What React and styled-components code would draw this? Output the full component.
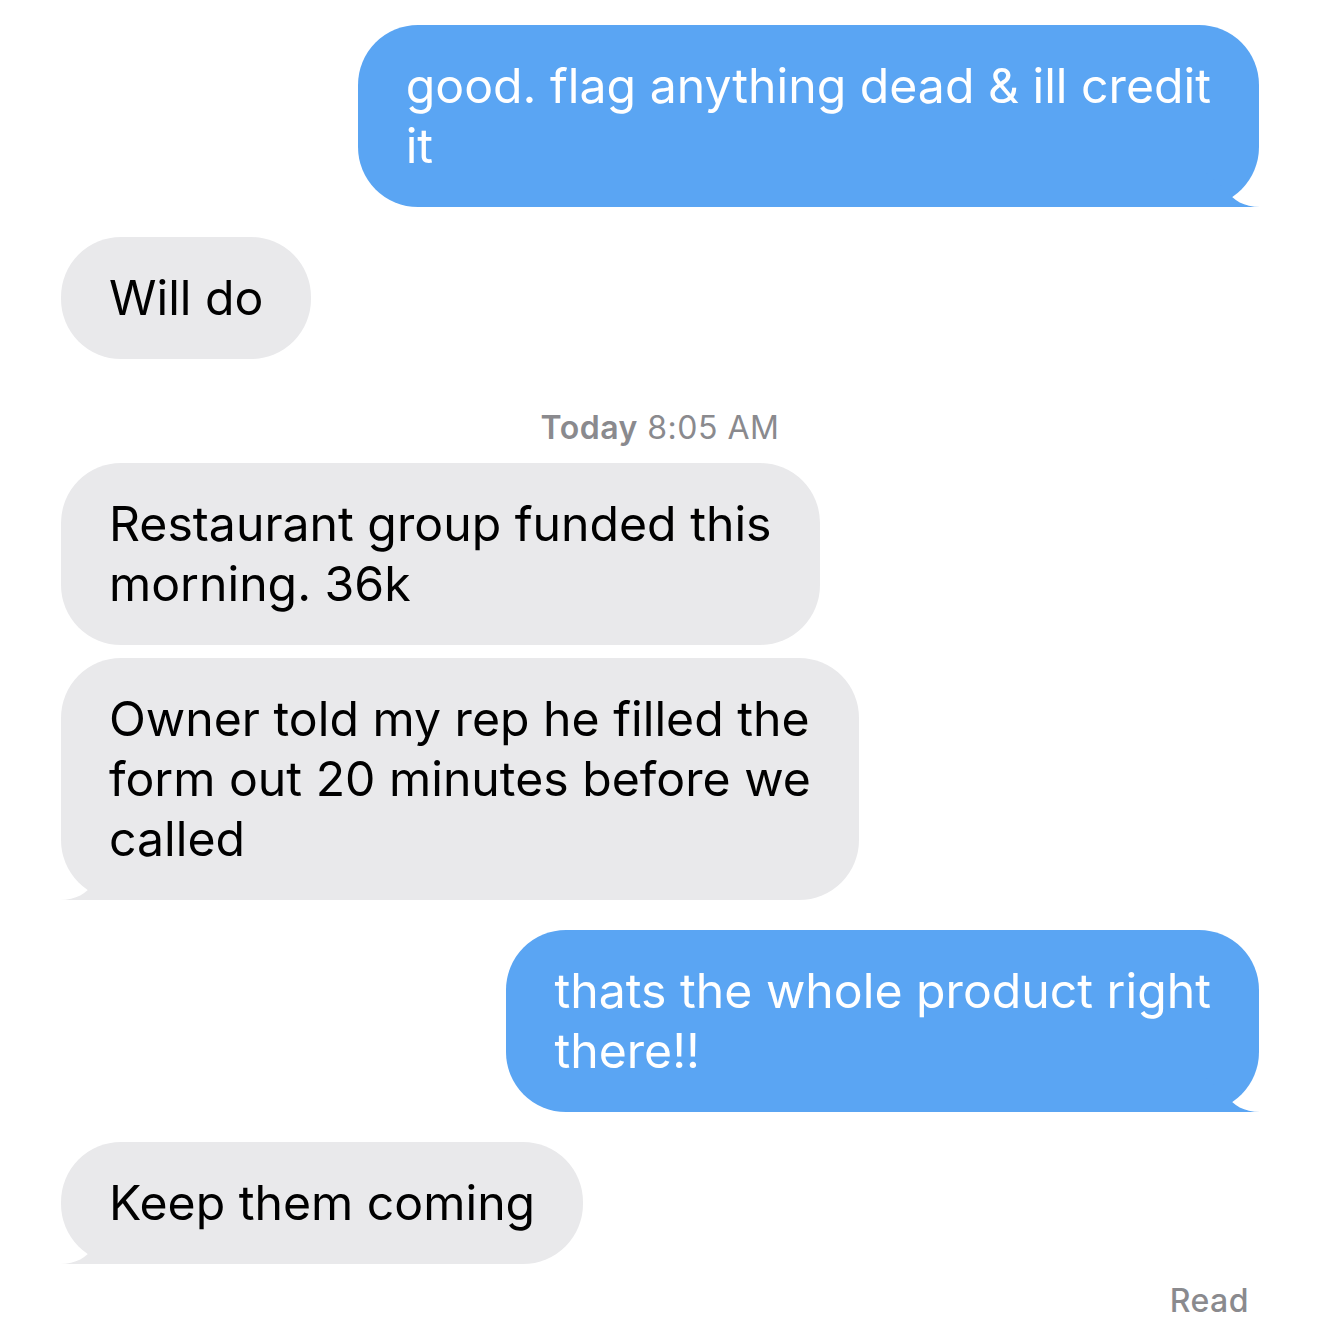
import React from 'react'
import styled, { createGlobalStyle } from 'styled-components'

const GlobalStyle = createGlobalStyle`
  html, body {
    margin: 0;
    background: #fff;
  }
  body {
    font-family: Inter, "Noto Sans", sans-serif;
    -webkit-font-smoothing: antialiased;
  }
`

const BLUE = '#5AA5F3'
const GRAY = '#E9E9EB'

function Tail({ side }) {
  return (
    <TailSvg $side={side} width="62" height="40" viewBox="0 0 62 40">
      <path d="M0 0 L28 24 C34 33 45 40 61 40 L0 40 Z" fill={side === 'me' ? BLUE : GRAY} />
    </TailSvg>
  )
}

function Bubble({ from, lines, tail, gap }) {
  return (
    <Row $from={from} $gap={gap}>
      <Body $from={from}>
        {lines.map((l, i) => <Line key={i}>{l}</Line>)}
        {tail && <Tail side={from} />}
      </Body>
    </Row>
  )
}

function App() {
  return (
    <Thread>
      <GlobalStyle />
      <Bubble from="me" tail lines={['good. flag anything dead & ill credit', 'it']} />
      <Bubble from="them" gap={30} lines={['Will do']} />
      <Stamp><strong>Today</strong> 8:05 AM</Stamp>
      <Bubble from="them" gap={17} lines={['Restaurant group funded this', 'morning. 36k']} />
      <Bubble from="them" gap={13} tail lines={['Owner told my rep he filled the', 'form out 20 minutes before we', 'called']} />
      <Bubble from="me" gap={30} tail lines={['thats the whole product right', 'there!!']} />
      <Bubble from="them" gap={30} tail lines={['Keep them coming']} />
      <Receipt>Read</Receipt>
    </Thread>
  )
}

const Thread = styled.div`
  display: flex;
  flex-direction: column;
  padding: 25px 61px 0 61px;
  box-sizing: border-box;
`

const Row = styled.div`
  display: flex;
  justify-content: ${p => p.$from === 'me' ? 'flex-end' : 'flex-start'};
  margin-top: ${p => p.$gap || 0}px;
`

const Body = styled.div`
  position: relative;
  display: flex;
  flex-direction: column;
  padding: 31px 48px;
  border-radius: 60px;
  background: ${p => p.$from === 'me' ? BLUE : GRAY};
  color: ${p => p.$from === 'me' ? '#fff' : '#000'};
  font-size: 48.2px;
  line-height: 60px;
`

const Line = styled.span`
  white-space: nowrap;
`

const TailSvg = styled.svg`
  position: absolute;
  bottom: 0;
  ${p => p.$side === 'me' ? 'right: -2px;' : 'left: -2px; transform: scaleX(-1);'}
  display: block;
`

const Stamp = styled.div`
  margin-top: 51px;
  text-align: center;
  font-size: 32px;
  line-height: 36px;
  letter-spacing: 0.5px;
  color: #8A8A8E;
  & strong {
    font-weight: 600;
  }
`

const Receipt = styled.div`
  align-self: flex-end;
  margin-top: 19px;
  margin-right: 10px;
  font-size: 32px;
  line-height: 36px;
  letter-spacing: 0.5px;
  font-weight: 500;
  color: #8A8A8E;
`

export default App
